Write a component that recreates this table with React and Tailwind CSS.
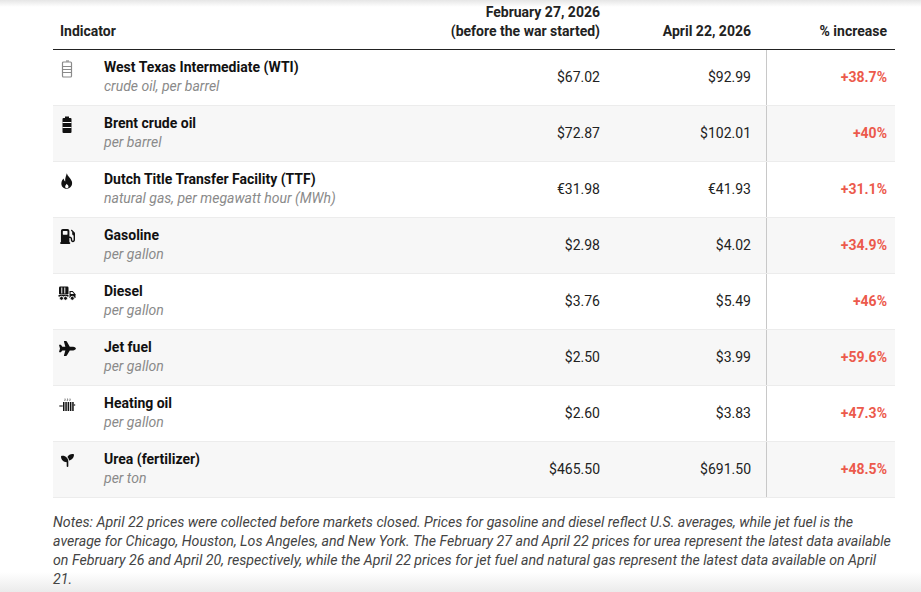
import React from "react";
import { FaGasPump, FaPlane, FaSeedling } from "react-icons/fa6";

const BarrelOutline = () => (
  <svg width="14" height="18" viewBox="0 0 14 18" fill="none" stroke="#8a8a8a" strokeWidth="1.2">
    <path d="M6 1h3" />
    <rect x="2.5" y="2" width="9" height="15" rx="1" />
    <path d="M2.5 6.5h9M2.5 9.5h9M2.5 12.5h9" />
  </svg>
);

const BarrelFilled = () => (
  <svg width="14" height="18" viewBox="0 0 14 18">
    <path d="M5 0.5h4v1.5H5z" fill="#111" />
    <rect x="2.5" y="2" width="9" height="15" rx="1" fill="#111" />
    <path d="M2.5 6.5h9M2.5 11.5h9" stroke="#fff" strokeWidth="1" />
  </svg>
);

const Flame = () => (
  <svg width="14" height="16" viewBox="0 0 14 16">
    <path
      d="M6.8 0.3C7.3 3 10.6 5 11.8 8.3c1.2 3.6-1.2 7.4-5 7.4-3.5 0-5.9-2.6-5.4-6 .3-2 1.4-3.3 2.3-4.1.1 1.5.7 2.5 1.5 2.9C4.9 5 6.3 2.6 6.8.3z"
      fill="#111"
    />
    <path d="M6.9 15.2c-1.2 0-1.9-.9-1.7-2 .2-.9 1-1.4 1.4-2.4.7.9 1.9 1.6 1.9 2.8 0 .9-.7 1.6-1.6 1.6z" fill="#fff" />
  </svg>
);

const Truck = () => (
  <svg width="19" height="16" viewBox="0 0 19 16">
    <rect x="1" y="1.5" width="9.5" height="8" rx="1.2" fill="#111" />
    <path d="M3.8 2.5v6M6.8 2.5v6" stroke="#fff" strokeWidth="1" />
    <rect x="0.5" y="10" width="10" height="1.6" fill="#111" />
    <path d="M11.5 6h3.2l2.8 3.2V13h-6z" fill="#111" />
    <path d="M12.6 7.1h1.8l1.6 1.8h-3.4z" fill="#fff" />
    <circle cx="3.5" cy="13.3" r="2" fill="#111" stroke="#fff" strokeWidth="0.9" />
    <circle cx="7.5" cy="13.3" r="2" fill="#111" stroke="#fff" strokeWidth="0.9" />
    <circle cx="14.3" cy="13.3" r="2" fill="#111" stroke="#fff" strokeWidth="0.9" />
  </svg>
);

const Radiator = () => (
  <svg width="17" height="15" viewBox="0 0 17 15">
    <path d="M6 4c-.6-.8.6-1.4 0-2.4M8.5 4c-.6-.8.6-1.4 0-2.4M11 4c-.6-.8.6-1.4 0-2.4" stroke="#444" strokeWidth="0.8" fill="none" />
    <path d="M.5 9h3" stroke="#111" strokeWidth="1.6" strokeDasharray="1.2 0.6" />
    <rect x="4" y="5" width="1.5" height="9" fill="#111" />
    <rect x="6.3" y="5" width="1.5" height="9" fill="#111" />
    <rect x="8.6" y="5" width="1.5" height="9" fill="#111" />
    <rect x="10.9" y="5" width="1.5" height="9" fill="#111" />
    <rect x="13.2" y="5" width="1.5" height="9" fill="#111" />
    <path d="M14.7 8h1.5" stroke="#111" strokeWidth="1.2" />
  </svg>
);

const rows = [
  { icon: <BarrelOutline />, name: "West Texas Intermediate (WTI)", sub: "crude oil, per barrel", feb: "$67.02", apr: "$92.99", pct: "+38.7%" },
  { icon: <BarrelFilled />, name: "Brent crude oil", sub: "per barrel", feb: "$72.87", apr: "$102.01", pct: "+40%" },
  { icon: <Flame />, name: "Dutch Title Transfer Facility (TTF)", sub: "natural gas, per megawatt hour (MWh)", feb: "€31.98", apr: "€41.93", pct: "+31.1%" },
  { icon: <FaGasPump className="h-[15px] w-[15px] text-[#111]" />, name: "Gasoline", sub: "per gallon", feb: "$2.98", apr: "$4.02", pct: "+34.9%" },
  { icon: <Truck />, name: "Diesel", sub: "per gallon", feb: "$3.76", apr: "$5.49", pct: "+46%" },
  { icon: <FaPlane className="h-[15px] w-[17px] text-[#111]" />, name: "Jet fuel", sub: "per gallon", feb: "$2.50", apr: "$3.99", pct: "+59.6%" },
  { icon: <Radiator />, name: "Heating oil", sub: "per gallon", feb: "$2.60", apr: "$3.83", pct: "+47.3%" },
  { icon: <FaSeedling className="h-[13px] w-[13px] text-[#111]" />, name: "Urea (fertilizer)", sub: "per ton", feb: "$465.50", apr: "$691.50", pct: "+48.5%" },
];

const cols = "grid grid-cols-[51px_336px_168px_158px_129px]";

export default function App() {
  return (
    <div className="h-[592px] w-[921px] overflow-hidden bg-[linear-gradient(to_bottom,#e6e6e6_0px,#ffffff_7px,#ffffff_572px,#ebebeb_592px)] font-['Roboto','Liberation_Sans',sans-serif] text-[14px] text-[#222]">
      <div className="ml-[53px] w-[842px]">
        {/* header */}
        <div className={`${cols} h-[50px] items-end border-b-[1.5px] border-[#222] pb-[8px] font-bold leading-[19px] text-[#222]`}>
          <div className="col-span-2 pl-[7px]">Indicator</div>
          <div className="pr-2 text-right">
            February 27, 2026
            <br />
            (before the war started)
          </div>
          <div className="pr-[15px] text-right">April 22, 2026</div>
          <div className="pr-2 text-right">% increase</div>
        </div>

        {/* rows */}
        {rows.map((r, i) => (
          <div
            key={r.name}
            className={`${cols} h-[56px] border-b border-[#ececec] ${i % 2 === 1 ? "bg-[#f7f7f7]" : "bg-white"}`}
          >
            <div className="flex h-[37px] items-center justify-center pr-[23px]">{r.icon}</div>
            <div className="flex flex-col justify-center leading-[19px] -mt-[1px]">
              <div className="font-bold text-[#111]">{r.name}</div>
              <div className="italic text-[#8a8a8a]">{r.sub}</div>
            </div>
            <div className="flex items-center justify-end pr-2">{r.feb}</div>
            <div className="flex items-center justify-end pr-[15px]">{r.apr}</div>
            <div className="flex items-center justify-end border-l border-[#c8c8c8] pr-2 font-bold text-[#ec5a4c]">
              {r.pct}
            </div>
          </div>
        ))}

        {/* notes */}
        <p className="mt-[15px] text-[14.2px] italic leading-[19px] text-[#444]">
          Notes: April 22 prices were collected before markets closed. Prices for gasoline and diesel reflect U.S. averages, while jet fuel is the average for Chicago, Houston, Los Angeles, and New York. The February 27 and April 22 prices for urea represent the latest data available on February 26 and April 20, respectively, while the April 22 prices for jet fuel and natural gas represent the latest data available on April 21.
        </p>
      </div>
    </div>
  );
}
